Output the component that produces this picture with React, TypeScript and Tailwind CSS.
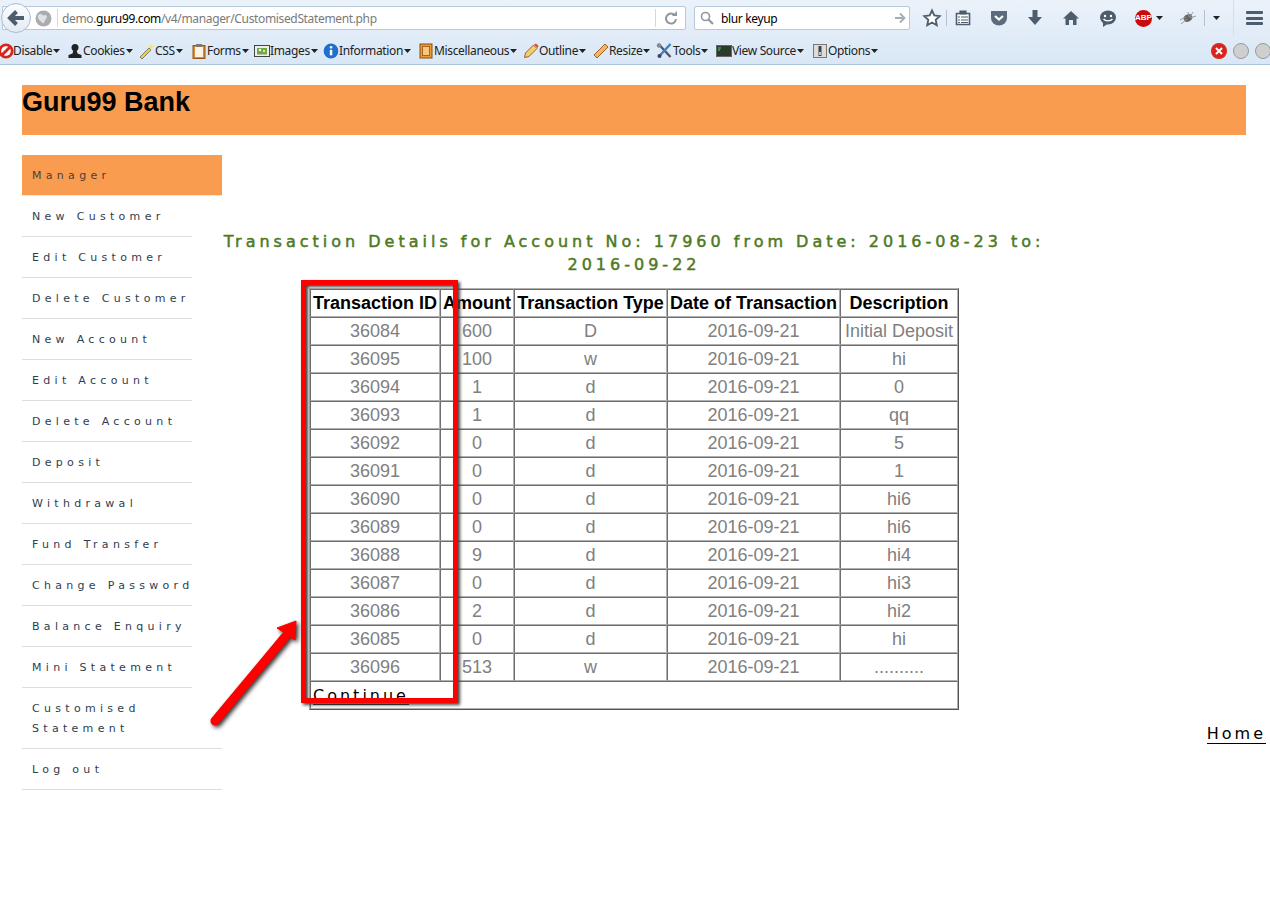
import type { ReactNode } from "react"

const Caret = ({ className = "" }: { className?: string }) => (
  <svg width="7" height="4" viewBox="0 0 7 4" className={className}>
    <path d="M0 0h7L3.5 4z" fill="#222" />
  </svg>
)

const s = { width: 16, height: 16, viewBox: "0 0 16 16" }

const menuItems: { label: string; width: string; icon: ReactNode }[] = [
  {
    label: "Disable",
    width: "w-[67px]",
    icon: (
      <svg {...s} className="-ml-[2px] -mr-px">
        <circle cx="8" cy="8" r="6.200" fill="#fff" stroke="#d9261c" strokeWidth="2.800" />
        <path d="M4 12 12 4" stroke="#d9261c" strokeWidth="3" />
      </svg>
    ),
  },
  {
    label: "Cookies",
    width: "w-[72px]",
    icon: (
      <svg {...s}>
        <circle cx="8" cy="4.500" r="3.500" fill="#222" />
        <path d="M6.500 7h3l1 3.500 4 1.500v3H1.500v-3l4-1.500z" fill="#222" />
      </svg>
    ),
  },
  {
    label: "CSS",
    width: "w-[52px]",
    icon: (
      <svg {...s}>
        <path d="M1 14 10 5l2 2-9 9z" fill="#f0cf3c" stroke="#555" strokeWidth=".7" />
        <path d="M12 0l.8 3 3 .6-3 1-.8 3-.8-3-3-1 3-.6z" fill="#f2e27a" />
      </svg>
    ),
  },
  {
    label: "Forms",
    width: "w-[63px]",
    icon: (
      <svg {...s}>
        <rect x="2" y="2.500" width="12" height="13" fill="#d88a35" stroke="#9a5514" />
        <rect x="4" y="4" width="8" height="10" fill="#fbf4e4" />
        <rect x="5" y="1" width="6" height="3" fill="#7a7a7a" />
      </svg>
    ),
  },
  {
    label: "Images",
    width: "w-[69px]",
    icon: (
      <svg {...s}>
        <rect x="0.500" y="2.500" width="15" height="11" fill="#eee" stroke="#444" />
        <rect x="3" y="5" width="10" height="6.500" fill="#6fa648" />
        <circle cx="6" cy="7" r="1.200" fill="#fff" />
        <circle cx="10" cy="8" r="1.200" fill="#dfe98a" />
      </svg>
    ),
  },
  {
    label: "Information",
    width: "w-[95px]",
    icon: (
      <svg {...s}>
        <circle cx="8" cy="8" r="7.400" fill="#1f6fcb" />
        <rect x="6.800" y="6.800" width="2.500" height="5.500" fill="#fff" />
        <rect x="6.800" y="3.200" width="2.500" height="2.200" fill="#fff" />
      </svg>
    ),
  },
  {
    label: "Miscellaneous",
    width: "w-[105px]",
    icon: (
      <svg {...s}>
        <rect x="2" y="1" width="12" height="14" fill="#eb9a35" stroke="#8a4c10" />
        <rect x="4.500" y="3.500" width="7" height="9" fill="#f7c67f" stroke="#a8651f" />
      </svg>
    ),
  },
  {
    label: "Outline",
    width: "w-[70px]",
    icon: (
      <svg {...s}>
        <path d="M1.500 14.500l1-4.500 8-8 3.500 3.500-8 8z" fill="#f3cf6a" stroke="#a0622a" />
        <path d="M11 1.500l3.500 3.500 1-2-2.500-2.500z" fill="#d84a3a" />
      </svg>
    ),
  },
  {
    label: "Resize",
    width: "w-[63px]",
    icon: (
      <svg {...s}>
        <path d="M1 12 12 1l3 3L4 15z" fill="#f0b860" stroke="#a0622a" />
      </svg>
    ),
  },
  {
    label: "Tools",
    width: "w-[60px]",
    icon: (
      <svg {...s} className="w-[17px]">
        <path d="M2 1l12 13" stroke="#556" strokeWidth="2.400" />
        <path d="M14 1 2 14" stroke="#3b82c4" strokeWidth="2.400" />
        <circle cx="2.500" cy="2.500" r="2.300" fill="#889" />
        <circle cx="3" cy="13" r="2" fill="#445" />
      </svg>
    ),
  },
  {
    label: "View Source",
    width: "w-[96px]",
    icon: (
      <svg {...s}>
        <rect x="0.500" y="2.500" width="15" height="11" fill="#2c3a2e" stroke="#666" />
        <path d="M2 5h3M2 7h2" stroke="#5fd06a" />
      </svg>
    ),
  },
  {
    label: "Options",
    width: "w-[70px]",
    icon: (
      <svg {...s}>
        <rect x="1.500" y="1.500" width="13" height="13" fill="#ddd" stroke="#777" />
        <rect x="6.500" y="3" width="3" height="10" fill="#444" />
        <rect x="7.300" y="9" width="1.500" height="3" fill="#eee" />
      </svg>
    ),
  },
]

const navItems: { label: string; width: string }[] = [
  { label: "New Customer", width: "w-[170px] whitespace-nowrap" },
  { label: "Edit Customer", width: "w-[170px] whitespace-nowrap" },
  { label: "Delete Customer", width: "w-[170px] whitespace-nowrap" },
  { label: "New Account", width: "w-[170px] whitespace-nowrap" },
  { label: "Edit Account", width: "w-[170px] whitespace-nowrap" },
  { label: "Delete Account", width: "w-[170px] whitespace-nowrap" },
  { label: "Deposit", width: "w-[170px] whitespace-nowrap" },
  { label: "Withdrawal", width: "w-[170px] whitespace-nowrap" },
  { label: "Fund Transfer", width: "w-[170px] whitespace-nowrap" },
  { label: "Change Password", width: "w-[170px] whitespace-nowrap" },
  { label: "Balance Enquiry", width: "w-[170px] whitespace-nowrap" },
  { label: "Mini Statement", width: "w-[170px] whitespace-nowrap" },
  { label: "Customised Statement", width: "w-[200px]" },
  { label: "Log out", width: "w-[200px]" },
]

const rows = [
  ["36084", "600", "D", "2016-09-21", "Initial Deposit"],
  ["36095", "100", "w", "2016-09-21", "hi"],
  ["36094", "1", "d", "2016-09-21", "0"],
  ["36093", "1", "d", "2016-09-21", "qq"],
  ["36092", "0", "d", "2016-09-21", "5"],
  ["36091", "0", "d", "2016-09-21", "1"],
  ["36090", "0", "d", "2016-09-21", "hi6"],
  ["36089", "0", "d", "2016-09-21", "hi6"],
  ["36088", "9", "d", "2016-09-21", "hi4"],
  ["36087", "0", "d", "2016-09-21", "hi3"],
  ["36086", "2", "d", "2016-09-21", "hi2"],
  ["36085", "0", "d", "2016-09-21", "hi"],
  ["36096", "513", "w", "2016-09-21", ".........."],
]

const headers = ["Transaction ID", "Amount", "Transaction Type", "Date of Transaction", "Description"]

const cell =
  "h-[28px] border border-t-[#6e6e6e] border-l-[#6e6e6e] border-r-[#b0b0b0] border-b-[#b0b0b0] p-0 text-center text-[18px] leading-[26px]"

function BrowserChrome() {
  return (
    <div className="h-[65px] border-b border-[#a9c2da] bg-gradient-to-b from-[#ebf2fa] to-[#d9e7f6] font-['Noto_Sans',sans-serif] tracking-[-0.35px]">
      <div className="relative flex h-[36px] items-center">
        {/* location bar */}
        <div className="ml-[2px] flex h-[24px] w-[684px] items-center rounded-r-[2px] border border-[#b7c8da] bg-white">
          <svg width="17" height="17" viewBox="0 0 16 16" className="ml-[32px]">
            <circle cx="8" cy="8" r="7.500" fill="#a9adb2" />
            <path d="M3 5c3-3 4 1 6 0s3 2 1 4-1 5-3 3-5-3-4-7z" fill="#dfe2e5" />
          </svg>
          <div className="ml-[5px] h-[18px] w-px bg-[#cfd8e2]" />
          <div className="ml-[4px] flex-1 pt-px text-[12px] whitespace-nowrap text-[#7a7a7a]">
            demo.<span className="text-black">guru99.com</span>/v4/manager/CustomisedStatement.php
          </div>
          <div className="h-[18px] w-px bg-[#cfd8e2]" />
          <svg width="14" height="14" viewBox="0 0 14 14" className="mr-[7px] ml-[8px]">
            <path d="M11 4.500A5 5 0 1 0 12 8" fill="none" stroke="#8d98a3" strokeWidth="2" />
            <path d="M8 5h5V0z" fill="#8d98a3" />
          </svg>
        </div>
        {/* back button */}
        <div className="absolute top-[3px] left-px flex h-[30px] w-[30px] items-center justify-center rounded-full border border-[#a9bccf] bg-gradient-to-b from-[#fbfdff] to-[#e3ebf3]">
          <svg width="18" height="16" viewBox="0 0 18 16">
            <path d="M9.500 1.500 3 8l6.500 6.500M3.500 8H17" fill="none" stroke="#4d5d6d" strokeWidth="4" />
          </svg>
        </div>
        {/* search bar */}
        <div className="ml-[8px] flex h-[24px] w-[216px] items-center rounded-[2px] border border-[#b7c8da] bg-white">
          <svg width="14" height="14" viewBox="0 0 14 14" className="ml-[5px]">
            <circle cx="5.500" cy="5.500" r="4" fill="none" stroke="#8d98a3" strokeWidth="1.600" />
            <path d="M8.500 8.500 13 13" stroke="#8d98a3" strokeWidth="2.200" />
          </svg>
          <div className="ml-[7px] flex-1 pt-px text-[12px] text-black">blur keyup</div>
          <svg width="12" height="12" viewBox="0 0 12 12" className="mr-[3px]">
            <path d="M6 1.500 10.500 6 6 10.500M10 6H1" fill="none" stroke="#a5aeb7" strokeWidth="1.800" />
          </svg>
        </div>
        {/* toolbar icons */}
        <div className="ml-[12px] flex items-center">
          <svg width="20" height="20" viewBox="0 0 20 20">
            <path d="M10 2.500l2.300 5 5.400.6-4 3.700 1.100 5.400L10 14.500l-4.800 2.700 1.100-5.400-4-3.700 5.400-.6z" fill="#fff" stroke="#4d5d6d" strokeWidth="1.800" />
          </svg>
          <div className="ml-[4px] h-[16px] w-px bg-[#b5c3d1]" />
          <svg width="16" height="16" viewBox="0 0 16 16" className="ml-[8px]">
            <path d="M1.500 3.500h13v11h-13z" fill="#fff" stroke="#4d5d6d" strokeWidth="1.600" />
            <path d="M5 1h6v3H5zM3 7h2M3 10h2M3 12.500h2M6 7h7M6 10h7M6 12.500h7" stroke="#4d5d6d" strokeWidth="1.200" fill="#4d5d6d" />
          </svg>
          <svg width="18" height="16" viewBox="0 0 18 16" className="ml-[19px]">
            <path d="M1 1h16v7a8 7.500 0 0 1-16 0z" fill="#5b6b7b" />
            <path d="M5 6l4 3.500L13 6" fill="none" stroke="#fff" strokeWidth="2.200" />
          </svg>
          <svg width="16" height="16" viewBox="0 0 16 16" className="ml-[19px]">
            <path d="M5.500 0h5v7H15l-7 8-7-8h4.500z" fill="#4d5d6d" />
          </svg>
          <svg width="18" height="16" viewBox="0 0 18 16" className="ml-[19px]">
            <path d="M9 1 1 8.500h2.500V15h3.500v-5h4v5h3.500V8.500H17z" fill="#4d5d6d" />
          </svg>
          <svg width="18" height="17" viewBox="0 0 18 17" className="ml-[19px]">
            <ellipse cx="9" cy="7.500" rx="8" ry="7" fill="#4d5d6d" />
            <path d="M4 12.500V17l4.500-3z" fill="#4d5d6d" />
            <circle cx="6" cy="6" r="1.200" fill="#fff" />
            <circle cx="12" cy="6" r="1.200" fill="#fff" />
            <path d="M4.500 9c2 2.500 7 2.500 9 0" fill="none" stroke="#fff" strokeWidth="1.300" />
          </svg>
          <div className="ml-[18px] flex h-[17px] w-[17px] items-center justify-center rounded-full bg-[#c80b0b] font-['Liberation_Sans',sans-serif] text-[8px] leading-none font-bold tracking-normal text-white">
            ABP
          </div>
          <Caret className="ml-[4px]" />
          <svg width="18" height="14" viewBox="0 0 18 14" className="ml-[16px]">
            <ellipse cx="9" cy="7" rx="4.500" ry="3.500" fill="#666" transform="rotate(-25 9 7)" />
            <path d="M1 9l6-3M2 13l6-5M9 1l1 5M14 1l-3 5M17 5l-6 2" stroke="#999" strokeWidth="1" />
          </svg>
          <div className="ml-[7px] h-[16px] w-px bg-[#b5c3d1]" />
          <Caret className="ml-[8px]" />
          <div className="ml-[13px] h-[36px] w-px bg-[#d3deea]" />
          <div className="ml-[12px] flex w-[17px] flex-col gap-[2.500px]">
            <div className="h-[3px] rounded-[1px] bg-[#4d5d6d]" />
            <div className="h-[3px] rounded-[1px] bg-[#4d5d6d]" />
            <div className="h-[3px] rounded-[1px] bg-[#4d5d6d]" />
          </div>
        </div>
      </div>
      <div className="flex h-[28px] items-center pt-[2px]">
        {menuItems.map((item) => (
          <div key={item.label} className={`flex shrink-0 items-center ${item.width}`}>
            {item.icon}
            <span className="text-[12px] leading-none text-[#222]">{item.label}</span>
            <Caret className="ml-px" />
          </div>
        ))}
        <div className="mr-[-1px] ml-auto flex items-center gap-[6px]">
          <div className="flex h-[16px] w-[16px] items-center justify-center rounded-full bg-[#d8261c]">
            <svg width="8" height="8" viewBox="0 0 8 8">
              <path d="M1 1l6 6M7 1 1 7" stroke="#fff" strokeWidth="2" />
            </svg>
          </div>
          <div className="h-[16px] w-[16px] rounded-full border border-[#9a9a9a] bg-[#cfcfcf]" />
          <div className="h-[16px] w-[16px] rounded-full border border-[#9a9a9a] bg-[#cfcfcf]" />
        </div>
      </div>
    </div>
  )
}

function Sidebar() {
  return (
    <div className="w-[200px] shrink-0 font-['DejaVu_Sans',sans-serif] text-[11px] leading-[20px] tracking-[4.3px] text-[#2f3e4e]">
      <div className="h-[41px] border-b border-[#e8e8e8] bg-[#f99c50] px-[10px] pt-[11px] text-[#4a3f38]">Manager</div>
      {navItems.map((item) => (
        <div key={item.label} className={`border-b border-[#dedede] px-[10px] pt-[11px] pb-[9px] ${item.width}`}>
          {item.label}
        </div>
      ))}
    </div>
  )
}

function TransactionTable() {
  return (
    <table className="mx-auto w-[650px] table-fixed border-separate border-spacing-0 border border-t-[#b0b0b0] border-r-[#555] border-b-[#555] border-l-[#b0b0b0] font-['Liberation_Sans',sans-serif]">
      <colgroup>
        <col className="w-[130px]" />
        <col className="w-[74px]" />
        <col className="w-[153px]" />
        <col className="w-[173px]" />
        <col className="w-[118px]" />
      </colgroup>
      <thead>
        <tr>
          {headers.map((h) => (
            <th key={h} className={`${cell} font-bold whitespace-nowrap text-black`}>
              {h}
            </th>
          ))}
        </tr>
      </thead>
      <tbody>
        {rows.map((row) => (
          <tr key={row[0]}>
            {row.map((value, i) => (
              <td key={i} className={`${cell} whitespace-nowrap text-[#808080]`}>
                {value}
              </td>
            ))}
          </tr>
        ))}
        <tr>
          <td colSpan={5} className="h-[28px] border border-t-[#6e6e6e] border-r-[#b0b0b0] border-b-[#b0b0b0] border-l-[#6e6e6e] p-0 pl-[2px] align-top font-['DejaVu_Sans',sans-serif] text-[16px] tracking-[3px] text-black">
            <span className="block h-[23px] w-fit border-b border-black leading-[28px]">Continue</span>
          </td>
        </tr>
      </tbody>
    </table>
  )
}

export default function App() {
  return (
    <div className="relative h-[909px] w-[1270px] overflow-hidden bg-white">
      <BrowserChrome />
      <div className="mt-[20px] ml-[22px] h-[50px] w-[1224px] bg-[#f99c50] font-['Liberation_Sans',sans-serif] text-[27px] leading-[34px] font-bold text-black">
        Guru99 Bank
      </div>
      <div className="mt-[20px] ml-[22px] flex">
        <Sidebar />
        <div className="flex flex-1 flex-col pt-[75px]">
          <div className="w-[824px]">
            <div className="mb-[12px] text-center font-['DejaVu_Sans',sans-serif] text-[16px] leading-[23px] font-medium tracking-[4px] text-[#4f7a1f] [-webkit-text-stroke:0.5px_#4f7a1f]">
              Transaction Details for Account No: 17960 from Date: 2016-08-23 to: 2016-09-22
            </div>
            <TransactionTable />
          </div>
          <div className="mt-[14px] mr-[4px] self-end text-right font-['DejaVu_Sans',sans-serif] text-[16px] leading-[20px] tracking-[3px] text-black">
            <span className="border-b border-black">Home</span>
          </div>
        </div>
      </div>

      {/* annotation over the table */}
      <div className="absolute top-[280px] left-[301px] h-[423px] w-[157px] border-[5px] border-[#f00] shadow-[2px_2px_3px_#444,inset_2px_2px_3px_#444]" />
      <svg width="110" height="125" viewBox="0 0 110 125" className="absolute top-[610px] left-[200px] drop-shadow-[2px_2px_2px_#333]">
        <path d="M15 111 85 27" stroke="#f00" strokeWidth="9" strokeLinecap="round" />
        <path d="M96 11 77 18 95 30z" fill="#f00" stroke="#f00" strokeWidth="1" />
      </svg>
    </div>
  )
}
